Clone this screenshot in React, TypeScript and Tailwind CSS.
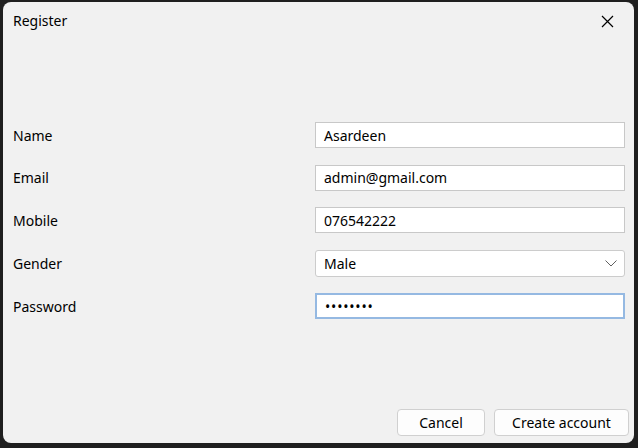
import React from 'react';

const fields = [
    { label: 'Name', value: 'Asardeen' },
    { label: 'Email', value: 'admin@gmail.com' },
    { label: 'Mobile', value: '076542222' },
];

export default function App() {
    return (
        <div
            className="w-[638px] h-[448px] bg-[#1f1f1f] pl-[3px] pt-[2px] pr-[4px] pb-[5px] text-[14px] text-black"
            style={{ fontFamily: '"Noto Sans", "Segoe UI", sans-serif' }}
        >
            <div className="h-full rounded-[8px] bg-[#f1f1f1] flex flex-col">
                {/* title bar */}
                <div className="h-[38px] flex items-center justify-between pl-[10px] pr-[20px]">
                    <span className="leading-none">Register</span>
                    <svg width="13" height="13" viewBox="0 0 13 13" className="text-black">
                        <path d="M1 1 L12 12 M12 1 L1 12" stroke="currentColor" strokeWidth="1.2" fill="none" />
                    </svg>
                </div>

                {/* form */}
                <div className="mt-[82px] flex flex-col gap-[16.5px] pl-[10px] pr-[9px]">
                    {fields.map(f => (
                        <div key={f.label} className="flex items-center h-[26px]">
                            <span className="flex-1">{f.label}</span>
                            <div className="w-[310px] h-[26px] bg-white border border-[#c8c8c8] flex items-center pl-[8px]">
                                {f.value}
                            </div>
                        </div>
                    ))}
                    <div className="flex items-center h-[27px]">
                        <span className="flex-1">Gender</span>
                        <div className="w-[310px] h-[27px] bg-white border border-[#cccccc] rounded-[3px] flex items-center justify-between pl-[8px] pr-[7px]">
                            <span>Male</span>
                            <svg width="12" height="7" viewBox="0 0 12 7">
                                <path d="M0.5 0.5 L6 6 L11.5 0.5" stroke="#606060" strokeWidth="1" fill="none" />
                            </svg>
                        </div>
                    </div>
                    <div className="flex items-center h-[26px]">
                        <span className="flex-1">Password</span>
                        <div className="w-[310px] h-[26px] bg-white border-2 border-[#95b9e2] flex items-center pl-[8px] text-[14px] tracking-[0.8px]">
                            ••••••••
                        </div>
                    </div>
                </div>

                {/* footer */}
                <div className="mt-auto flex justify-end gap-[9px] pr-[5px] pb-[7px]">
                    <button className="w-[88px] h-[27px] bg-[#fdfdfd] border border-[#d0d0d0] rounded-[4px]">Cancel</button>
                    <button className="w-[135px] h-[27px] bg-[#fdfdfd] border border-[#d0d0d0] rounded-[4px]">Create account</button>
                </div>
            </div>
        </div>
    );
}
